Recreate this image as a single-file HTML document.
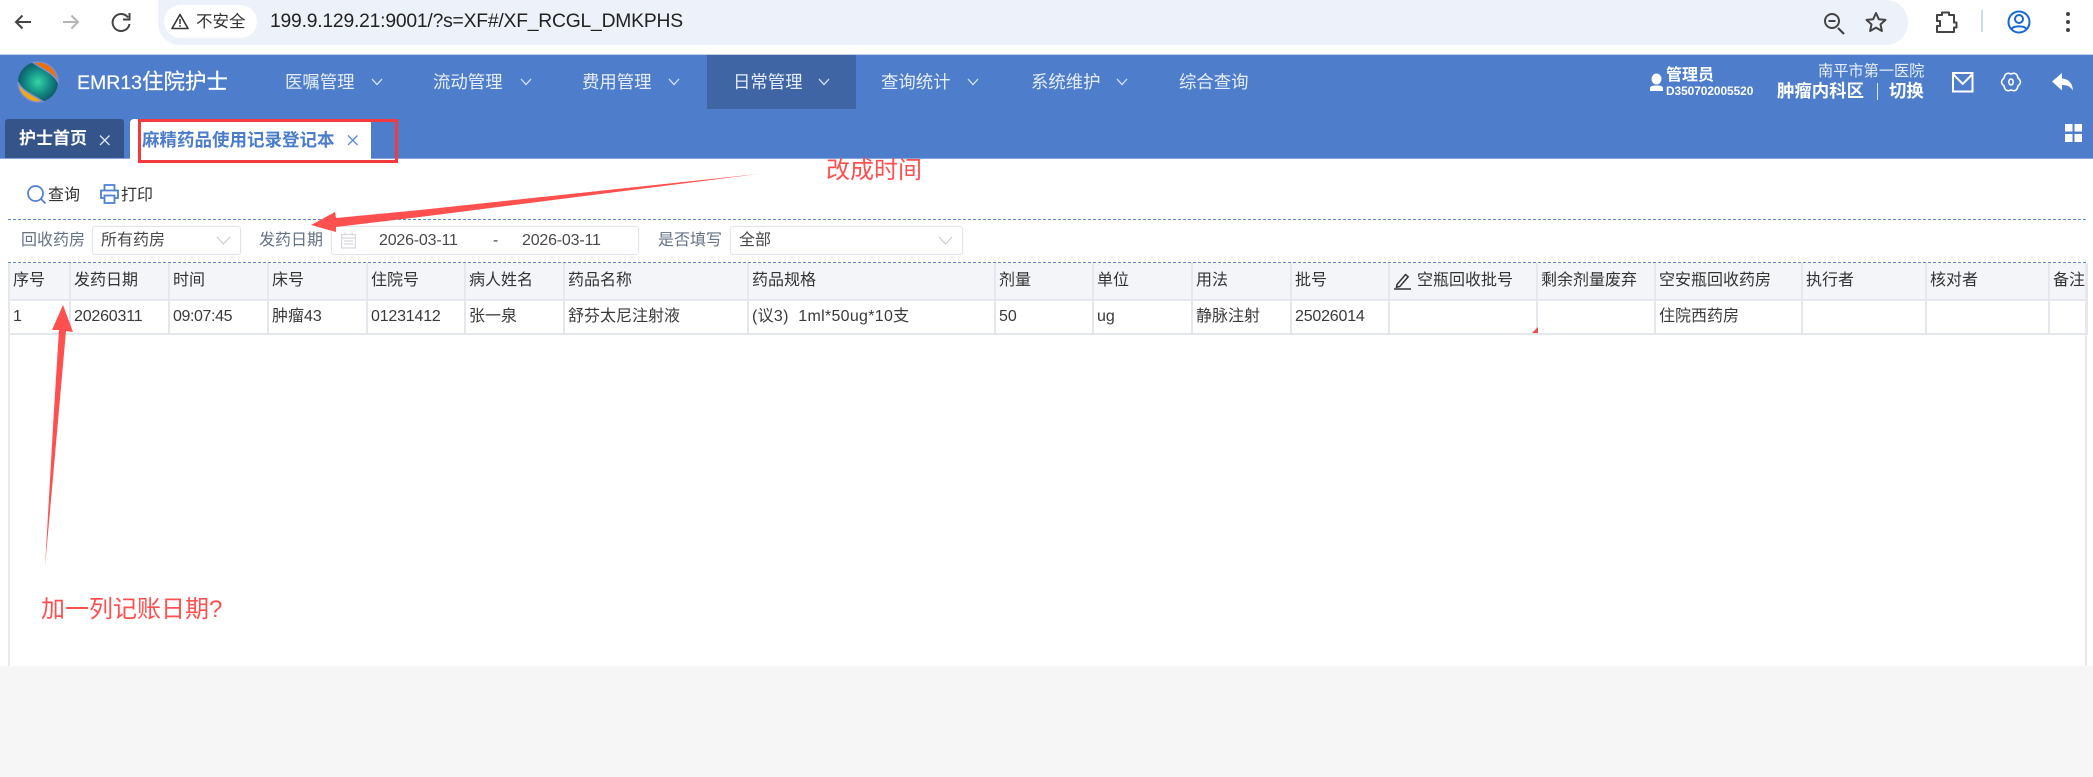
<!DOCTYPE html>
<html lang="zh"><head><meta charset="utf-8"><title>麻精药品使用记录登记本</title>
<style>
html,body{margin:0;padding:0;background:#fff}
body{position:relative;width:2093px;height:777px;overflow:hidden;font-family:"Liberation Sans","Noto Sans CJK SC",sans-serif;color:#333}
.a{position:absolute}
.t{position:absolute;white-space:nowrap;line-height:20px;height:20px}
svg{position:absolute;overflow:visible}
.nav{font-size:17.4px;color:#e6edf8}
.lb{font-size:16px;color:#667285}
.box{position:absolute;top:226px;height:27px;border:1px solid #e2e5ec;border-radius:3px;background:#fff;box-shadow:0 0 1px #e8eaf0}
.val{font-size:16px;color:#4a4a4a}
table{position:absolute;left:8px;top:263px;width:2078px;border-collapse:collapse;table-layout:fixed;font-size:16px;color:#3a3a3a}
td,th{border:2px solid #e4e7ee;padding:0 0 0 3px;font-weight:400;text-align:left;white-space:nowrap;overflow:hidden;line-height:20px}
th{height:36px;background:#f3f5f9;color:#333;border-top:none}
td{height:32px;background:#fff}
.num{letter-spacing:-.2px}
</style></head><body>

<!-- browser bar -->
<div class="a" style="left:158px;top:0;width:1750px;height:45px;background:#edf1fa;border-radius:0 22px 22px 22px/0 22px 22px 22px;border-bottom-left-radius:22px"></div>
<svg style="left:0;top:0" width="2093" height="54" fill="none">
<path d="M31 22H16M22.5 15.5L16 22l6.500 6.500" stroke="#444" stroke-width="2"/>
<path d="M63 22h15M71.500 15.500L78 22l-6.500 6.500" stroke="#b5b5b5" stroke-width="2"/>
<path d="M128 17.500A8.500 8.500 0 1 0 129.500 24" stroke="#444" stroke-width="2"/><path d="M129.500 13v6.500H123" stroke="#444" stroke-width="2"/>
<path d="M1838 28l6 6" stroke="#444" stroke-width="2.200"/><circle cx="1832" cy="21" r="7" stroke="#444" stroke-width="2"/><path d="M1828.500 21h7" stroke="#444" stroke-width="2"/>
<path d="M1876 13l2.800 6.200 6.700.7-5 4.500 1.400 6.600-5.900-3.400-5.900 3.400 1.400-6.600-5-4.500 6.700-.7z" stroke="#444" stroke-width="2" stroke-linejoin="round"/>
<path d="M1937 15h5v-2.500h7V15h5v7.500h2.500v5H1954V32h-17v-6h3v-5h-3z" stroke="#444" stroke-width="2" stroke-linejoin="round"/>
<path d="M1982 10v22" stroke="#c9daf3" stroke-width="2"/>
<circle cx="2019" cy="22" r="10.500" stroke="#1a66d2" stroke-width="2"/><circle cx="2019" cy="19" r="4" stroke="#1a66d2" stroke-width="2"/><path d="M2011.500 29c2-3.500 13-3.500 15 0" stroke="#1a66d2" stroke-width="2"/>
<circle cx="2068" cy="14" r="2" fill="#444"/><circle cx="2068" cy="22" r="2" fill="#444"/><circle cx="2068" cy="30" r="2" fill="#444"/>
</svg>
<div class="a" style="left:164px;top:5px;width:93px;height:33px;border-radius:17px;background:#fff"></div>
<svg style="left:171px;top:13px" width="18" height="17" fill="none"><path d="M9 1.500L17 15.500H1z" stroke="#333" stroke-width="1.600" stroke-linejoin="round"/><path d="M9 6v5M9 12.200v1.600" stroke="#333" stroke-width="1.500"/></svg>
<div class="t" style="left:196px;top:12px;font-size:16.500px;color:#333">不安全</div>
<div class="t" id="url" style="left:270px;top:12px;font-size:19.300px;color:#222;letter-spacing:-.2px">199.9.129.21:9001/?s=XF#/XF_RCGL_DMKPHS</div>

<!-- header -->
<div class="a" style="left:0;top:54px;width:2093px;height:105px;background:#4e7ecb;border-top:1px solid #c3cddd;border-bottom:1px solid #86a5da;box-sizing:border-box"></div>
<div class="a" style="left:707px;top:55px;width:149px;height:54px;background:#3f65a4"></div>

<svg style="left:18px;top:62px" width="40" height="40" viewBox="0 0 40 40">
<defs>
<radialGradient id="g" cx=".5" cy=".5" r=".55"><stop offset="0" stop-color="#35d6a3"/><stop offset=".55" stop-color="#128a84"/><stop offset="1" stop-color="#0d4f60"/></radialGradient>
</defs>
<circle cx="20" cy="20" r="20" fill="url(#g)"/>
<path d="M15 .6A20 20 0 0 1 40 20C35 11 26 8 15 .6z" fill="#f07008" stroke="#7a8ed0" stroke-width="1.500"/>
<path d="M0 20C4 29 14 32 25 39.400A20 20 0 0 1 0 20z" fill="#efa91b" stroke="#7a8ed0" stroke-width="1.500"/>
</svg>
<div class="t" style="left:77px;top:72px;font-size:19.500px;color:#fff;-webkit-text-stroke:.2px #fff">EMR13<span style="font-size:21.500px">住院护士</span></div>

<div class="t nav" style="left:285px;top:72px">医嘱管理</div>
<div class="t nav" style="left:433px;top:72px">流动管理</div>
<div class="t nav" style="left:582px;top:72px">费用管理</div>
<div class="t nav" style="left:733px;top:72px">日常管理</div>
<div class="t nav" style="left:881px;top:72px">查询统计</div>
<div class="t nav" style="left:1031px;top:72px">系统维护</div>
<div class="t nav" style="left:1179px;top:72px">综合查询</div>
<svg style="left:0;top:0" width="1300" height="100" fill="none" stroke="#dbe5f5" stroke-width="1.300">
<path d="M372 79l5 5.500 5-5.500M521 79l5 5.500 5-5.500M669 79l5 5.500 5-5.500M819 79l5 5.500 5-5.500M968 79l5 5.500 5-5.500M1117 79l5 5.500 5-5.500"/>
</svg>

<!-- header right -->
<svg style="left:1650px;top:73px" width="13" height="18" fill="#fff"><ellipse cx="6.500" cy="6" rx="5" ry="5.500"/><path d="M0 18v-2.500C0 13 2.500 12.500 6.500 12.500S13 13 13 15.500V18z"/></svg>
<div class="t" style="left:1666px;top:66px;font-size:16px;font-weight:700;color:#fff">管理员</div>
<div class="t" style="left:1666px;top:81px;font-size:11.900px;font-weight:700;color:#fff;letter-spacing:-.05px">D350702005520</div>
<div class="t" style="left:1818px;top:62px;font-size:15.200px;color:#e6edf8">南平市第一医院</div>
<div class="t" style="left:1777px;top:81px;font-size:17.400px;font-weight:700;color:#fff">肿瘤内科区</div>
<div class="a" style="left:1877px;top:83px;width:1px;height:17px;background:#dbe5f5"></div>
<div class="t" style="left:1889px;top:81px;font-size:17.400px;font-weight:700;color:#fff">切换</div>
<svg style="left:0;top:0" width="2093" height="150" fill="none">
<rect x="1953" y="73" width="19.500" height="18.500" stroke="#fff" stroke-width="2"/><path d="M1953 74l9.750 10L1972.500 74" stroke="#fff" stroke-width="2"/>
<path d="M2017.900 78Q2023 82 2017.900 86Q2017 92.400 2011 90Q2005 92.400 2004.100 86Q1999 82 2004.100 78Q2005 71.600 2011 74Q2017 71.600 2017.900 78z" stroke="#fff" stroke-width="1.600" stroke-linejoin="round"/>
<ellipse cx="2011" cy="82" rx="2.200" ry="3" stroke="#fff" stroke-width="1.500"/>
<path d="M2052 81.500L2062 73v5.500c7 .5 10.500 5 11 12-2.500-4-6-5.500-11-5.500v5.500z" fill="#fff"/>
<path d="M2065 124h7.500v7.500H2065zM2074.500 124h7.500v7.500h-7.500zM2065 134h7.500v8H2065zM2074.500 134h7.500v8h-7.500z" fill="#fff"/>
</svg>

<!-- tabs -->
<div class="a" style="left:5px;top:119px;width:119px;height:39px;background:#34548a;border-radius:3px 3px 0 0"></div>
<div class="t" style="left:19px;top:129px;font-size:17px;font-weight:700;color:#fff">护士首页</div>
<div class="a" style="left:130px;top:119px;width:241px;height:40px;background:#fff;border-radius:4px 4px 0 0"></div>
<div class="t" style="left:142px;top:130px;font-size:17.500px;font-weight:700;color:#4b7ccb">麻精药品使用记录登记本</div>
<svg style="left:0;top:0" width="400" height="170" fill="none">
<path d="M100 135.500l9.500 9.500M109.500 135.500l-9.500 9.500" stroke="#dfe6f2" stroke-width="1.300"/>
<path d="M348 135.500l9.500 9.500M357.500 135.500l-9.500 9.500" stroke="#5d88cf" stroke-width="1.300"/>
<rect x="139.500" y="120.500" width="257" height="41" stroke="#f23b3f" stroke-width="3"/>
</svg>

<!-- toolbar -->
<svg style="left:26px;top:184px" width="22" height="22" fill="none" stroke="#4b80d2" stroke-width="1.700"><circle cx="9.500" cy="9.500" r="7.500"/><path d="M15 15l4.500 4.500"/></svg>
<div class="t" style="left:48px;top:186px;font-size:16px;color:#333">查询</div>
<svg style="left:100px;top:184px" width="19" height="20" fill="none" stroke="#4b80d2" stroke-width="1.800"><path d="M4.500 6V1h10v5M4.500 14H1V6.500h17V14h-3.500"/><path d="M4.500 11.500h10V19h-10z"/></svg>
<div class="t" style="left:121px;top:186px;font-size:16px;color:#333">打印</div>

<div class="a" style="left:8px;top:219px;width:2078px;height:0;border-top:1px dashed #5f8ad2"></div>

<!-- filters -->
<div class="t lb" style="left:21px;top:231px">回收药房</div>
<div class="box" style="left:92px;width:147px"></div>
<div class="t val" style="left:101px;top:231px">所有药房</div>
<div class="t lb" style="left:259px;top:231px">发药日期</div>
<div class="box" style="left:331px;width:306px"></div>
<svg style="left:341px;top:232px" width="15" height="17" fill="none" stroke="#d5d8de" stroke-width="1.200"><rect x=".6" y="2.500" width="13.800" height="13.500"/><path d="M.6 6h13.800M4 .5v3M11 .5v3M3 9h9M3 12h9"/></svg>
<div class="t val num" style="left:379px;top:231px">2026-03-11</div>
<div class="t val" style="left:493px;top:231px">-</div>
<div class="t val num" style="left:522px;top:231px">2026-03-11</div>
<div class="t lb" style="left:658px;top:231px">是否填写</div>
<div class="box" style="left:730px;width:231px"></div>
<div class="t val" style="left:739px;top:231px">全部</div>
<svg style="left:0;top:220px" width="1000" height="40" fill="none" stroke="#c9ced8" stroke-width="1.200"><path d="M217 17l6.500 7 6.500-7M939 17l6.500 7 6.500-7"/></svg>

<div class="a" style="left:8px;top:262px;width:2078px;height:0;border-top:1px dashed #5f8ad2"></div>

<!-- table -->
<table>
<colgroup><col style="width:61px"><col style="width:99px"><col style="width:99px"><col style="width:99px"><col style="width:98px"><col style="width:99px"><col style="width:184px"><col style="width:247px"><col style="width:98px"><col style="width:99px"><col style="width:99px"><col style="width:98px"><col style="width:148px"><col style="width:118px"><col style="width:147px"><col style="width:124px"><col style="width:123px"><col style="width:38px"></colgroup>
<tr><th>序号</th><th>发药日期</th><th>时间</th><th>床号</th><th>住院号</th><th>病人姓名</th><th>药品名称</th><th>药品规格</th><th>剂量</th><th>单位</th><th>用法</th><th>批号</th><th style="padding-left:27px">空瓶回收批号</th><th>剩余剂量废弃</th><th>空安瓶回收药房</th><th>执行者</th><th>核对者</th><th>备注</th></tr>
<tr><td>1</td><td class="num">20260311</td><td style="letter-spacing:-.4px">09:07:45</td><td>肿瘤43</td><td class="num">01231412</td><td>张一泉</td><td>舒芬太尼注射液</td><td style="letter-spacing:.3px">(议3)&nbsp; 1ml*50ug*10支</td><td>50</td><td>ug</td><td>静脉注射</td><td class="num">25026014</td><td></td><td></td><td>住院西药房</td><td></td><td></td><td></td></tr>
</table>
<svg style="left:1393px;top:272px" width="19" height="18" fill="none" stroke="#333" stroke-width="1.500"><path d="M4 12.500L12.500 2.500l2.700 2.300L6.800 14.500 3.500 15.200z"/><path d="M1 17h17"/></svg>
<svg style="left:1530px;top:325px" width="10" height="10"><path d="M8 2v6H2z" fill="#ef4a4a"/></svg>

<!-- empty area -->
<div class="a" style="left:8px;top:333px;width:2px;height:333px;background:#e8e8ee"></div>
<div class="a" style="left:2085px;top:263px;width:2px;height:403px;background:#e8e8ee"></div>
<div class="a" style="left:0;top:666px;width:2093px;height:111px;background:#f6f6f6"></div>

<!-- annotations -->
<svg style="left:0;top:0" width="2093" height="777">
<path d="M758 174L420 210 336 218 335 212 311 225 336 232 336 227 420 217z" fill="#ff5050"/>
<path d="M45 567L54 410 59 330 52 330 63 305 73 332 66 331 59 410z" fill="#ff5050"/>
</svg>
<div class="t" style="left:826px;top:156px;font-size:24px;line-height:30px;height:30px;color:#ff5050">改成时间</div>
<div class="t" style="left:41px;top:595px;font-size:24px;line-height:30px;height:30px;color:#ff5050">加一列记账日期?</div>
</body></html>
